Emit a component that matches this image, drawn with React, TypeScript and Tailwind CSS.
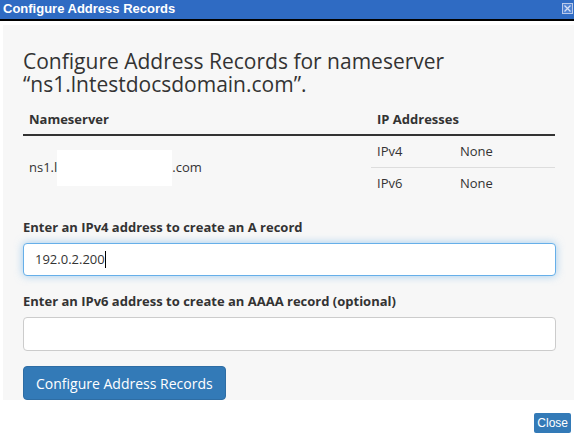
import React from "react";

export default function App() {
  return (
    <div className="w-[574px] h-[434px] bg-white overflow-hidden flex flex-col" style={{ fontFamily: '"Open Sans", sans-serif' }}>
      {/* title bar */}
      <div className="h-[21px] bg-[#2f6bc3] border-b-2 border-black flex items-start justify-between pl-[3px] pr-[1px] shrink-0">
        <span className="text-white font-bold text-[13px] leading-[18px]" style={{ fontFamily: '"Liberation Sans", Arial, sans-serif' }}>
          Configure Address Records
        </span>
        <svg width="11" height="11" viewBox="0 0 11 11" className="mt-[3px]">
          <rect x="0.5" y="0.5" width="10" height="10" fill="#4f82d2" stroke="#b9c9ea" />
          <path d="M2.5 2.5 L8.5 8.5 M8.5 2.5 L2.5 8.5" stroke="#d6e0f5" strokeWidth="1.3" />
        </svg>
      </div>

      {/* panel */}
      <div className="ml-[3px] mt-[4px] h-[375px] bg-[#f7f7f7] px-[20px] pt-[25px] text-[#333] overflow-hidden shrink-0">
        <h2 className="text-[21px] leading-[23px] text-[#333]">
          Configure Address Records for nameserver
          <br />“ns1.lntestdocsdomain.com”.
        </h2>

        {/* table */}
        <div className="mt-[9px] w-[532px]">
          <div className="flex border-b-2 border-[#333] h-[31px] items-center font-bold text-[13px]">
            <div className="w-[348px] pl-[6px]">Nameserver</div>
            <div className="w-[184px] pl-[6px]">IP Addresses</div>
          </div>
          <div className="flex text-[13px]">
            <div className="w-[348px] pl-[6px] flex items-center h-[64px]">
              <span>ns1.l</span>
              <span className="inline-block w-[115px] h-[36px] bg-white"></span>
              <span>.com</span>
            </div>
            <div className="w-[184px] flex flex-col">
              <div className="flex h-[32px] items-center border-b border-[#ddd]">
                <div className="w-[83px] pl-[6px]">IPv4</div>
                <div className="pl-[6px]">None</div>
              </div>
              <div className="flex h-[32px] items-center">
                <div className="w-[83px] pl-[6px]">IPv6</div>
                <div className="pl-[6px]">None</div>
              </div>
            </div>
          </div>
        </div>

        <div className="mt-[18px] font-bold text-[13px] leading-[18px]">Enter an IPv4 address to create an A record</div>
        <div className="mt-[7px] w-[533px] h-[33px] bg-white border border-[#66afe9] rounded-[4px] flex items-center px-[11px] text-[13px] shadow-[0_0_8px_rgba(102,175,233,0.6)]">
          <span>192.0.2.200</span>
          <span className="inline-block w-px h-[17px] bg-black"></span>
        </div>

        <div className="mt-[16px] font-bold text-[13px] leading-[18px]">Enter an IPv6 address to create an AAAA record (optional)</div>
        <div className="mt-[7px] w-[533px] h-[34px] bg-white border border-[#ccc] rounded-[4px]"></div>

        <button className="mt-[15px] h-[34px] px-[12px] bg-[#337ab7] border border-[#2e6da4] rounded-[4px] text-white text-[14px]">
          Configure Address Records
        </button>
      </div>

      <div className="flex justify-end pr-[3px] mt-[13px]">
        <button className="h-[20px] px-[3px] bg-[#337ab7] text-white text-[12px] leading-[20px] rounded-[2px]" style={{ fontFamily: '"Liberation Sans", Arial, sans-serif' }}>
          Close
        </button>
      </div>
    </div>
  );
}
